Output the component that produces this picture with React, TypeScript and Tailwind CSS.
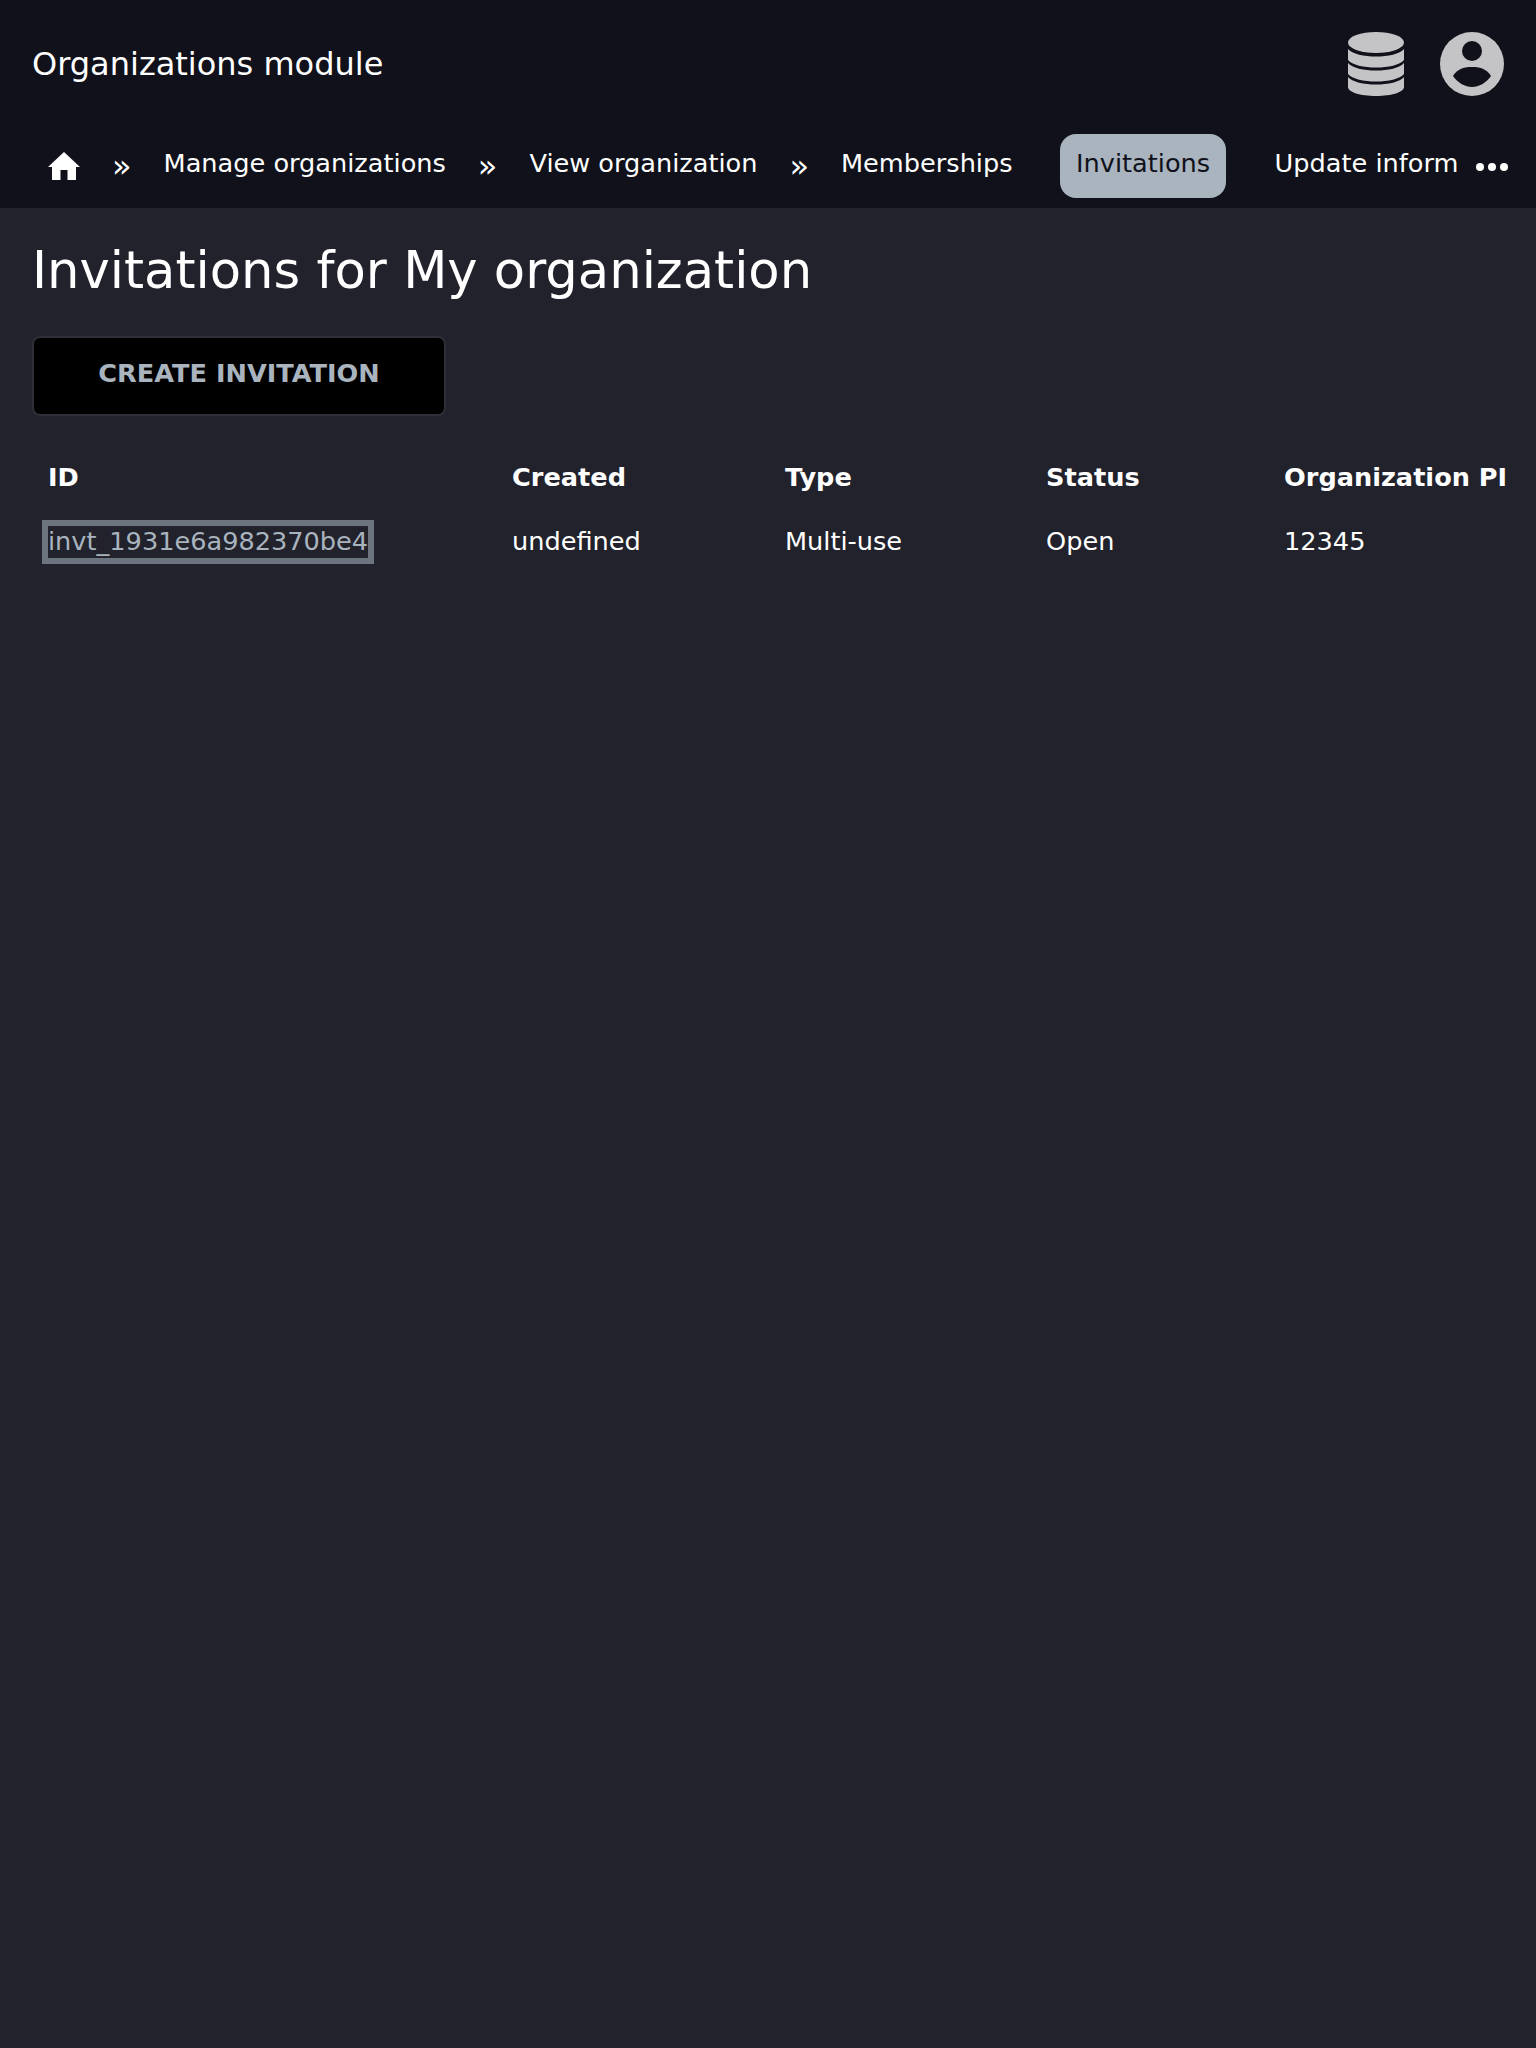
const font = { fontFamily: '"DejaVu Sans", sans-serif' }

function HomeIcon() {
  return (
    <svg viewBox="0 0 32 28" className="h-7 w-8 fill-white">
      <path d="M16 0 L32 15 L28 15 L28 28 L19.5 28 L19.5 18 L12.5 18 L12.5 28 L4 28 L4 15 L0 15 Z" />
    </svg>
  )
}

function DatabaseIcon() {
  return (
    <svg viewBox="0 0 56 64" className="h-16 w-14 fill-[#c4c4c6]">
      <ellipse cx="28" cy="10.5" rx="28" ry="10.5" />
      <path d="M0 17 C8 27 48 27 56 17 L56 28 C48 38 8 38 0 28 Z" />
      <path d="M0 31 C8 41 48 41 56 31 L56 42 C48 52 8 52 0 42 Z" />
      <path d="M0 45 C8 55 48 55 56 45 L56 55 C56 60 44 64 28 64 C12 64 0 60 0 55 Z" />
    </svg>
  )
}

function UserIcon() {
  return (
    <svg viewBox="0 0 64 64" className="h-16 w-16">
      <circle cx="32" cy="32" r="32" fill="#c4c4c6" />
      <circle cx="32" cy="19" r="10" fill="#10111a" />
      <path d="M13 44 C18 36 25 35 32 35 C39 35 46 36 51 44 C46 51 39 55 32 55 C25 55 18 51 13 44 Z" fill="#10111a" />
    </svg>
  )
}

function Sep({ className }: { className: string }) {
  return <span className={`text-[32px] leading-none text-white ${className}`}>»</span>
}

const columns = [
  { name: 'ID', width: 'w-[464px]' },
  { name: 'Created', width: 'w-[273px]' },
  { name: 'Type', width: 'w-[261px]' },
  { name: 'Status', width: 'w-[238px]' },
  { name: 'Organization PI', width: 'w-[252px]' },
]

export default function App() {
  return (
    <div style={font} className="min-h-[2048px] w-full overflow-hidden bg-[#21222b] text-white">
      <header className="h-[208px] bg-[#10111a]">
        <div className="flex h-[128px] items-center justify-between pl-8 pr-8">
          <h1 className="text-[32px] font-normal leading-none">Organizations module</h1>
          <div className="flex items-center gap-[36px]">
            <DatabaseIcon />
            <UserIcon />
          </div>
        </div>
        <nav className="relative mt-[6px] flex h-[64px] items-center overflow-hidden pl-12 text-[25.6px] leading-none">
          <HomeIcon />
          <Sep className="ml-[32px]" />
          <a className="ml-[32px] -translate-y-[2px] whitespace-nowrap">Manage organizations</a>
          <Sep className="ml-[32px]" />
          <a className="ml-[32px] -translate-y-[2px] whitespace-nowrap">View organization</a>
          <Sep className="ml-[32px]" />
          <a className="ml-[32px] -translate-y-[2px] whitespace-nowrap">Memberships</a>
          <a className="ml-[47px] flex h-[64px] w-[166px] justify-center rounded-2xl bg-[#a9b4bf] pl-px pt-[17px] text-[#10111a]">
            Invitations
          </a>
          <a className="ml-[49px] -translate-y-[2px] whitespace-nowrap">Update inform</a>
          <span className="absolute right-0 top-0 flex h-full w-[64px] items-center justify-start gap-1 bg-[#10111a] pl-1 pt-0.5">
            <i className="h-2 w-2 rounded-full bg-white" />
            <i className="h-2 w-2 rounded-full bg-white" />
            <i className="h-2 w-2 rounded-full bg-white" />
          </span>
        </nav>
      </header>
      <main className="px-8">
        <h2 className="mt-[32px] text-[51.2px] font-normal leading-[60px]">Invitations for My organization</h2>
        <button className="mt-[36px] block h-[80px] w-[414px] rounded-lg border-2 border-[#2e3038] bg-black pb-[6px] text-[25.6px] font-bold text-[#a9b4bf]">
          CREATE INVITATION
        </button>
        <table className="mt-[29px] w-[1488px] table-fixed border-collapse text-[25.6px]">
          <thead>
            <tr>
              {columns.map((c) => (
                <th key={c.name} className={`${c.width} h-[64px] whitespace-nowrap pl-4 text-left font-bold`}>
                  {c.name}
                </th>
              ))}
            </tr>
          </thead>
          <tbody>
            <tr>
              <td className="h-[64px] pl-4">
                <a className="pb-[2px] text-[#a9b4bf] outline-[6px] outline-solid outline-[#6c757f]">invt_1931e6a982370be4</a>
              </td>
              <td className="pl-4">undefined</td>
              <td className="pl-4">Multi-use</td>
              <td className="pl-4">Open</td>
              <td className="pl-4">12345</td>
            </tr>
          </tbody>
        </table>
      </main>
    </div>
  )
}
